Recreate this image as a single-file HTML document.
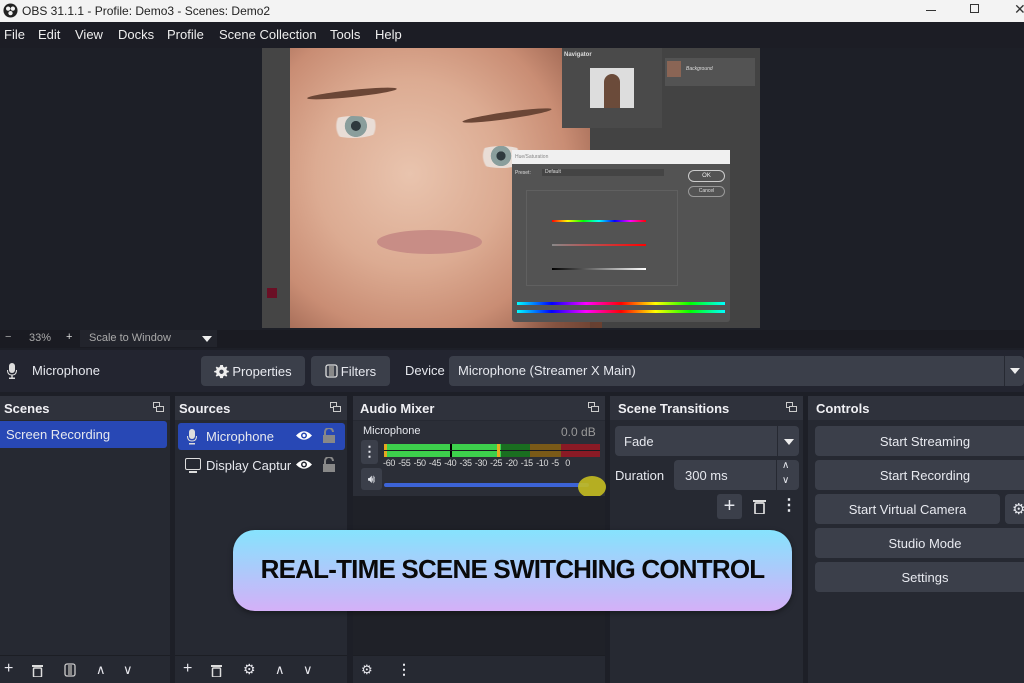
<!DOCTYPE html>
<html><head><meta charset="utf-8">
<style>
*{margin:0;padding:0;box-sizing:border-box}
body{width:1024px;height:683px;overflow:hidden;background:#1d1f27;font-family:"Liberation Sans",sans-serif;color:#e6e8ee;position:relative;font-size:13px}
.a{position:absolute}
.btn{position:absolute;background:#3b3f4a;border-radius:4px;color:#e8eaf0;display:flex;align-items:center;justify-content:center;font-size:13px}
.dock{position:absolute;top:396px;bottom:0;background:#262932}
.hdr{position:absolute;left:0;right:0;top:0;height:24px;background:#2f323c;font-weight:bold;font-size:13px;padding:5px 0 0 4px;color:#f0f0f4}
.fl{position:absolute;right:6px;top:6px;width:11px;height:10px}
.tb{position:absolute;left:0;right:0;bottom:0;height:28px;background:#262932;border-top:1px solid #1c1e24}
.tb span{position:absolute;top:4px;font-size:16px;color:#e8e8ee}
</style></head><body>
<div class="a" style="left:0;top:0;width:1024px;height:22px;background:#f3f3f3;color:#222;font-size:12px">
 <svg class="a" style="left:3px;top:3px" width="15" height="15" viewBox="0 0 16 16"><circle cx="8" cy="8" r="7.5" fill="#222"/><circle cx="5.5" cy="6" r="2.3" fill="#f3f3f3"/><circle cx="10.5" cy="6" r="2.3" fill="#f3f3f3"/><circle cx="8" cy="10.8" r="2.3" fill="#f3f3f3"/></svg>
 <div class="a" style="left:22px;top:4px">OBS 31.1.1 - Profile: Demo3 - Scenes: Demo2</div>
 <div class="a" style="left:926px;top:10px;width:10px;height:1px;background:#333"></div>
 <div class="a" style="left:970px;top:4px;width:9px;height:9px;border:1px solid #333"></div>
 <div class="a" style="left:1014px;top:1px;font-size:14px;color:#333">✕</div>
</div>
<div class="a" style="left:0;top:22px;width:1024px;height:26px;background:#1c1d25;font-size:13px;color:#eee">
 <span class="a" style="left:4px;top:5px">File</span><span class="a" style="left:38px;top:5px">Edit</span><span class="a" style="left:75px;top:5px">View</span><span class="a" style="left:118px;top:5px">Docks</span><span class="a" style="left:167px;top:5px">Profile</span><span class="a" style="left:219px;top:5px">Scene Collection</span><span class="a" style="left:330px;top:5px">Tools</span><span class="a" style="left:375px;top:5px">Help</span>
</div>
<div class="a" style="left:262px;top:48px;width:498px;height:280px;background:#434343;overflow:hidden">
 <div class="a" style="left:0;top:0;width:28px;height:280px;background:#454545"></div>
 <div class="a" style="left:5px;top:240px;width:10px;height:10px;background:#6a0f25"></div>
 <div class="a" style="left:28px;top:0;width:300px;height:280px;background:radial-gradient(ellipse 70% 75% at 40% 45%,#e9c4ae 0%,#dcab92 45%,#c98d74 75%,#9c6450 100%)"></div>
 <div class="a" style="left:250px;top:180px;width:90px;height:100px;background:linear-gradient(90deg,transparent,#6a4030)"></div>
 <div class="a" style="left:62px;top:68px;width:58px;height:22px;border-radius:50%;background:radial-gradient(circle at 55% 45%,#2f3a3e 0 14%,#8a9e9c 15% 32%,#e9ddd6 33% 55%,transparent 60%)"></div>
 <div class="a" style="left:210px;top:98px;width:58px;height:22px;border-radius:50%;background:radial-gradient(circle at 50% 45%,#2f3a3e 0 14%,#8a9e9c 15% 32%,#e9ddd6 33% 55%,transparent 60%)"></div>
 <div class="a" style="left:45px;top:42px;width:90px;height:7px;border-radius:50%;background:#6b4636;transform:rotate(-6deg)"></div>
 <div class="a" style="left:200px;top:64px;width:90px;height:7px;border-radius:50%;background:#6b4636;transform:rotate(-8deg)"></div>
 <div class="a" style="left:115px;top:182px;width:105px;height:24px;border-radius:50%;background:#c88d86"></div>
 <div class="a" style="left:300px;top:0;width:100px;height:80px;background:#4a4a4a"></div>
 <div class="a" style="left:302px;top:4px;font-size:6px;color:#ddd;font-weight:bold">Navigator</div>
 <div class="a" style="left:328px;top:20px;width:44px;height:40px;background:#ddd"><div class="a" style="left:14px;top:6px;width:16px;height:34px;background:#6b4b3a;border-radius:8px 8px 0 0"></div></div>
 <div class="a" style="left:403px;top:10px;width:90px;height:28px;background:#535353"></div>
 <div class="a" style="left:405px;top:13px;width:14px;height:16px;background:#8a6555"></div>
 <div class="a" style="left:424px;top:18px;font-size:5px;color:#ddd;font-style:italic">Background</div>
 <div class="a" style="left:250px;top:102px;width:218px;height:172px;background:#535353;border-radius:3px">
  <div class="a" style="left:0;top:0;right:0;height:14px;background:#f0f0f0;font-size:5px;color:#888;padding:4px 3px">Hue/Saturation</div>
  <div class="a" style="left:176px;top:20px;width:37px;height:12px;border:1px solid #ccc;border-radius:6px;font-size:6px;text-align:center;color:#eee;line-height:10px">OK</div>
  <div class="a" style="left:176px;top:36px;width:37px;height:11px;border:1px solid #999;border-radius:6px;font-size:5px;text-align:center;color:#ddd;line-height:9px">Cancel</div>
  <div class="a" style="left:3px;top:20px;font-size:5px;color:#ddd">Preset:</div>
  <div class="a" style="left:30px;top:19px;width:122px;height:7px;background:#444;font-size:5px;color:#ddd;padding-left:3px">Default</div>
  <div class="a" style="left:14px;top:40px;width:152px;height:96px;border:1px solid #606060"></div>
  <div class="a" style="left:40px;top:70px;width:94px;height:2px;background:linear-gradient(90deg,red,#ff0,#0f0,#0ff,#00f,#f0f,red)"></div>
  <div class="a" style="left:40px;top:94px;width:94px;height:2px;background:linear-gradient(90deg,#888,red)"></div>
  <div class="a" style="left:40px;top:118px;width:94px;height:2px;background:linear-gradient(90deg,#000,#fff)"></div>
  <div class="a" style="left:5px;top:152px;width:208px;height:3px;background:linear-gradient(90deg,#0ff,#00f,#f0f,red,#ff0,#0f0,#0ff)"></div>
  <div class="a" style="left:5px;top:160px;width:208px;height:3px;background:linear-gradient(90deg,#0ff,#00f,#f0f,red,#ff0,#0f0,#0ff)"></div>
 </div>
</div>
<div class="a" style="left:0;top:330px;width:1024px;height:18px;background:#1a1b22;font-size:11px;color:#aaa">
 <span class="a" style="left:5px;top:1px">−</span><span class="a" style="left:29px;top:2px">33%</span><span class="a" style="left:66px;top:1px;color:#ddd">+</span>
 <div class="a" style="left:80px;top:0;width:137px;height:17px;background:#22242c"></div>
 <span class="a" style="left:89px;top:2px">Scale to Window</span>
 <svg class="a" style="left:202px;top:6px" width="10" height="6"><path d="M0 0H10L5 6Z" fill="#eee"/></svg>
</div>
<div class="a" style="left:0;top:350px;width:1024px;height:42px;background:#232530">
 <svg class="a" style="left:7px;top:13px" width="10" height="16" viewBox="0 0 10 16"><rect x="2" y="0" width="6" height="10" rx="3" fill="#ddd"/><path d="M0.5 7Q0.5 12 5 12Q9.5 12 9.5 7" stroke="#ddd" fill="none"/><rect x="4.3" y="12" width="1.4" height="3" fill="#ddd"/><rect x="2" y="14.5" width="6" height="1.5" fill="#ddd"/></svg>
 <span class="a" style="left:32px;top:13px;font-size:13px">Microphone</span>
 <div class="btn" style="left:201px;top:6px;width:104px;height:30px">
  <svg width="15" height="15" viewBox="0 0 16 16" style="margin-right:3px"><path d="M8 1l1.5 0 .4 2 1.5.7 1.7-1.1 1.1 1.1-1.1 1.7.7 1.5 2 .4v1.5l-2 .4-.7 1.5 1.1 1.7-1.1 1.1-1.7-1.1-1.5.7-.4 2H6.5l-.4-2-1.5-.7-1.7 1.1-1.1-1.1 1.1-1.700-.7-1.5-2-.4V7.5l2-.4.7-1.5-1.1-1.7 1.1-1.1 1.7 1.1 1.5-.7.4-2z" fill="#eee"/><circle cx="8" cy="8.3" r="2.3" fill="#3b3f4a"/></svg>Properties</div>
 <div class="btn" style="left:311px;top:6px;width:79px;height:30px"><svg width="13" height="14" style="margin-right:3px"><rect x="1" y="1" width="11" height="12" rx="2" fill="none" stroke="#ddd" stroke-width="1.3"/><rect x="4" y="2" width="5" height="10" fill="#888"/></svg>Filters</div>
 <span class="a" style="left:405px;top:13px;font-size:13px">Device</span>
 <div class="a" style="left:449px;top:6px;width:575px;height:30px;background:#3b3f4a;border-radius:4px"><span class="a" style="left:9px;top:7px">Microphone (Streamer X Main)</span><div class="a" style="left:555px;top:0;width:1px;height:30px;background:#262932"></div><svg class="a" style="left:561px;top:12px" width="10" height="6"><path d="M0 0H10L5 6Z" fill="#eee"/></svg></div>
</div>
<div class="dock" style="left:0;width:170px">
 <div class="hdr">Scenes<svg class="fl" viewBox="0 0 11 10"><rect x="0.5" y="0.5" width="6" height="5" fill="none" stroke="#ccc"/><rect x="3.5" y="4.5" width="7" height="5" fill="#2f323c" stroke="#ccc"/></svg></div>
 <div class="a" style="left:0;top:25px;width:167px;height:27px;background:#2848b5;border-radius:0 3px 3px 0"><span class="a" style="left:6px;top:6px;font-size:13px">Screen Recording</span></div>
 <div class="tb"><span style="left:4px">+</span><svg class="a" style="left:32px;top:8px" width="11" height="13"><rect x="0" y="1" width="11" height="2" fill="#ddd"/><rect x="1.5" y="4" width="8" height="9" rx="1" fill="none" stroke="#ddd" stroke-width="1.5"/></svg><svg class="a" style="left:64px;top:7px" width="12" height="14"><rect x="1" y="1" width="10" height="12" rx="2" fill="none" stroke="#ccc" stroke-width="1.3"/><rect x="4" y="2" width="4" height="10" fill="#888"/></svg><span style="left:96px;font-size:13px;top:6px">∧</span><span style="left:123px;font-size:13px;top:6px">∨</span></div>
</div>
<div class="dock" style="left:175px;width:172px">
 <div class="hdr">Sources<svg class="fl" viewBox="0 0 11 10"><rect x="0.5" y="0.5" width="6" height="5" fill="none" stroke="#ccc"/><rect x="3.5" y="4.5" width="7" height="5" fill="#2f323c" stroke="#ccc"/></svg></div>
 <div class="a" style="left:3px;top:27px;width:167px;height:27px;background:#2848b5;border-radius:3px">
  <svg class="a" style="left:9px;top:6px" width="10" height="16" viewBox="0 0 10 16"><rect x="2" y="0" width="6" height="10" rx="3" fill="#ddd"/><path d="M0.5 7Q0.5 12 5 12Q9.5 12 9.5 7" stroke="#ddd" fill="none"/><rect x="2" y="14" width="6" height="1.5" fill="#ddd"/></svg>
  <span class="a" style="left:28px;top:6px">Microphone</span>
 </div>
 <div class="a" style="left:10px;top:62px;width:16px;height:12px;border:1.5px solid #ddd;border-radius:2px"></div><div class="a" style="left:14px;top:75px;width:8px;height:2px;background:#ddd"></div>
 <span class="a" style="left:31px;top:62px">Display Captur</span>
 <svg class="a" style="left:121px;top:34px" width="16" height="11" viewBox="0 0 16 11"><path d="M0 5.5Q8 -3 16 5.5Q8 14 0 5.5Z" fill="#fff"/><circle cx="8" cy="5.5" r="3" fill="#2848b5"/><circle cx="8" cy="5.5" r="1.5" fill="#fff"/></svg>
 <svg class="a" style="left:121px;top:63px" width="16" height="11" viewBox="0 0 16 11"><path d="M0 5.5Q8 -3 16 5.5Q8 14 0 5.5Z" fill="#fff"/><circle cx="8" cy="5.5" r="3" fill="#262932"/><circle cx="8" cy="5.5" r="1.5" fill="#fff"/></svg>
 <svg class="a" style="left:148px;top:32px" width="12" height="15"><path d="M2 7V4a4 4 0 0 1 8 0" stroke="#888" stroke-width="2" fill="none"/><rect x="0" y="7" width="12" height="8" fill="#888"/></svg>
 <svg class="a" style="left:148px;top:61px" width="12" height="15"><path d="M2 7V4a4 4 0 0 1 8 0" stroke="#888" stroke-width="2" fill="none"/><rect x="0" y="7" width="12" height="8" fill="#888"/></svg>
 <div class="tb"><span style="left:8px">+</span><svg class="a" style="left:36px;top:8px" width="11" height="13"><rect x="0" y="1" width="11" height="2" fill="#ddd"/><rect x="1.5" y="4" width="8" height="9" rx="1" fill="none" stroke="#ddd" stroke-width="1.5"/></svg><span style="left:68px;font-size:14px;top:5px">⚙</span><span style="left:100px;font-size:13px;top:6px">∧</span><span style="left:128px;font-size:13px;top:6px">∨</span></div>
</div>
<div class="dock" style="left:353px;width:252px">
 <div class="hdr" style="padding-left:7px">Audio Mixer<svg class="fl" viewBox="0 0 11 10"><rect x="0.5" y="0.5" width="6" height="5" fill="none" stroke="#ccc"/><rect x="3.5" y="4.5" width="7" height="5" fill="#2f323c" stroke="#ccc"/></svg></div>
 <div class="a" style="left:0;top:25px;width:252px;height:75px;background:#2b2e37"></div>
 <span class="a" style="left:10px;top:29px;font-size:11px">Microphone</span><span class="a" style="left:208px;top:29px;font-size:12px;color:#999">0.0 dB</span>
 <div class="a" style="left:8px;top:44px;width:17px;height:24px;background:#3b3f4a;border-radius:3px;font-size:14px;text-align:center;line-height:22px;font-weight:bold">⋮</div>
 <div class="a" style="left:8px;top:72px;width:21px;height:22px;background:#3b3f4a;border-radius:3px;font-size:12px;text-align:center;line-height:22px">🔊︎</div>
 <div class="a" style="left:31px;top:48px;width:216px;height:13px;background:linear-gradient(90deg,#e5a820 0 3px,#3dd04c 3px 66px,#000 66px 68px,#3dd04c 68px 117px,#1a6e20 117px 146px,#7a5a18 146px 177px,#8a1a25 177px)"></div>
 <div class="a" style="left:31px;top:54px;width:216px;height:1px;background:#1a1b20"></div>
 <div class="a" style="left:144px;top:48px;width:3px;height:13px;background:#e6ae20"></div>
 <div class="a" style="left:30px;top:62px;font-size:9px;color:#ddd;letter-spacing:-0.3px;word-spacing:1px">-60 -55 -50 -45 -40 -35 -30 -25 -20 -15 -10 -5 &nbsp;0</div>
 <div class="a" style="left:31px;top:87px;width:205px;height:4px;background:#3c63d6;border-radius:2px"></div>
 <div class="a" style="left:225px;top:80px;width:28px;height:22px;border-radius:50%;background:#c4bc20;opacity:.9"></div>
 <div class="a" style="left:0;top:100px;width:252px;height:160px;background:#1f2128"></div>
 <div class="tb"><span style="left:8px;font-size:13px;top:6px">⚙</span><span style="left:44px;font-size:14px;top:5px;font-weight:bold">⋮</span></div>
</div>
<div class="dock" style="left:610px;width:193px">
 <div class="hdr" style="padding-left:8px">Scene Transitions<svg class="fl" viewBox="0 0 11 10"><rect x="0.5" y="0.5" width="6" height="5" fill="none" stroke="#ccc"/><rect x="3.5" y="4.5" width="7" height="5" fill="#2f323c" stroke="#ccc"/></svg></div>
 <div class="a" style="left:5px;top:30px;width:184px;height:30px;background:#3b3f4a;border-radius:4px"><span class="a" style="left:9px;top:8px">Fade</span><div class="a" style="left:162px;top:0;width:1px;height:30px;background:#262932"></div><svg class="a" style="left:169px;top:13px" width="10" height="6"><path d="M0 0H10L5 6Z" fill="#eee"/></svg></div>
 <span class="a" style="left:5px;top:72px">Duration</span>
 <div class="a" style="left:64px;top:64px;width:125px;height:30px;background:#3b3f4a;border-radius:4px"><span class="a" style="left:11px;top:8px">300 ms</span><div class="a" style="left:102px;top:0;width:1px;height:30px;background:#262932"></div><span class="a" style="left:108px;top:0;font-size:10px">∧</span><span class="a" style="left:108px;top:15px;font-size:10px">∨</span></div>
 <div class="a" style="left:107px;top:98px;width:25px;height:25px;background:#3b3f4a;border-radius:3px;font-size:20px;text-align:center;line-height:24px">+</div>
 <svg class="a" style="left:143px;top:103px" width="13" height="15"><rect x="0" y="1" width="13" height="2" fill="#ddd"/><rect x="2" y="4" width="9" height="11" rx="1" fill="none" stroke="#ddd" stroke-width="1.7"/></svg>
 <span class="a" style="left:171px;top:99px;font-size:16px;font-weight:bold">⋮</span>
</div>
<div class="dock" style="left:808px;width:216px">
 <div class="hdr" style="padding-left:8px">Controls</div>
 <div class="btn" style="left:7px;top:30px;width:220px;height:30px">Start Streaming</div>
 <div class="btn" style="left:7px;top:64px;width:220px;height:30px">Start Recording</div>
 <div class="btn" style="left:7px;top:98px;width:185px;height:30px">Start Virtual Camera</div>
 <div class="btn" style="left:197px;top:98px;width:30px;height:30px;justify-content:flex-start;padding-left:7px;font-size:15px">⚙</div>
 <div class="btn" style="left:7px;top:132px;width:220px;height:30px">Studio Mode</div>
 <div class="btn" style="left:7px;top:166px;width:220px;height:30px">Settings</div>
</div>
<div class="a" style="left:233px;top:530px;width:559px;height:81px;border-radius:22px;background:linear-gradient(180deg,#86e3fd,#d4b0f8);box-shadow:0 2px 6px rgba(0,0,0,.4);display:flex;align-items:center;justify-content:center;color:#0a0a0a;font-weight:bold;font-size:26px;letter-spacing:-0.8px;padding-bottom:3px">REAL-TIME SCENE SWITCHING CONTROL</div>
</body></html>
